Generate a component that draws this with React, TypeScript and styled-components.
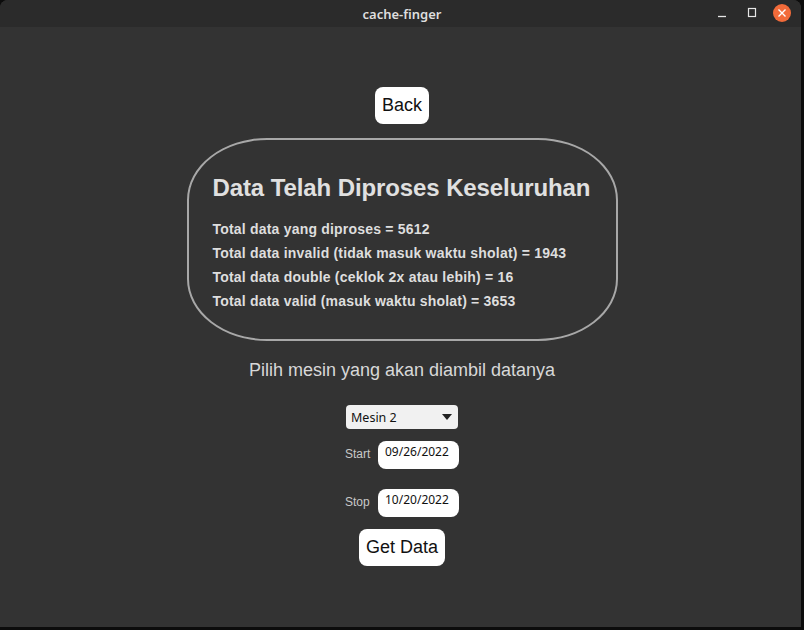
import styled, { createGlobalStyle } from 'styled-components';

const GlobalStyle = createGlobalStyle`
  html, body {
    margin: 0;
    padding: 0;
    background: #0c0c0c;
  }
  body {
    font-family: "Liberation Sans", Arial, sans-serif;
  }
`;

const Window = styled.div`
  width: 801px;
  height: 627px;
  display: flex;
  flex-direction: column;
  background: #333333;
  border-radius: 8px 8px 0 0;
  overflow: hidden;
`;

const TitleBar = styled.header`
  position: relative;
  height: 27px;
  flex: none;
  display: flex;
  align-items: center;
  justify-content: center;
  background: #2b2b2b;
`;

const Title = styled.span`
  font-family: "Noto Sans", "DejaVu Sans", sans-serif;
  font-weight: 600;
  font-size: 13px;
  color: #dedede;
  padding-left: 3px;
`;

const Controls = styled.div`
  position: absolute;
  right: 10px;
  top: 4px;
  display: flex;
  align-items: center;
  gap: 12px;
`;

const ControlButton = styled.span<{ $close?: boolean }>`
  width: 18px;
  height: 18px;
  border-radius: 50%;
  display: grid;
  place-items: center;
  background: ${({ $close }) => ($close ? '#f26b3a' : 'transparent')};
`;

const Content = styled.main`
  flex: 1;
  display: flex;
  flex-direction: column;
  align-items: center;
  padding: 60px 0 0 3px;
`;

const WhiteButton = styled.button<{ $top?: number }>`
  margin-top: ${({ $top }) => $top ?? 0}px;
  font-family: "Liberation Sans", Arial, sans-serif;
  font-size: 18px;
  color: #111;
  background: #ffffff;
  border: none;
  border-radius: 8px;
  height: 37px;
  padding: 0 7px;
  line-height: 37px;
`;

const Card = styled.section`
  box-sizing: border-box;
  width: 431px;
  margin-top: 14px;
  padding: 34px 20px 26px 24px;
  border: 2px solid #a8a8a8;
  border-radius: 80px / 62px;
  color: #dcdcdc;
`;

const Heading = styled.h2`
  margin: 0 0 15px;
  font-size: 24px;
  line-height: 28px;
  font-weight: 700;
  letter-spacing: -0.1px;
  white-space: nowrap;
  color: #e0e0e0;
`;

const StatLine = styled.p`
  margin: 0;
  font-size: 14px;
  line-height: 24px;
  font-weight: 700;
  letter-spacing: 0.2px;
  color: #dedede;
`;

const Prompt = styled.p`
  margin: 18px 0 0;
  font-size: 18px;
  line-height: 22px;
  color: #d8d8d8;
`;

const Select = styled.div`
  box-sizing: border-box;
  margin-top: 24px;
  width: 112px;
  height: 24px;
  padding: 0 6px 0 5px;
  display: flex;
  align-items: center;
  justify-content: space-between;
  background: #f1f1f1;
  border-radius: 4px;
  font-family: "Noto Sans", "DejaVu Sans", sans-serif;
  font-size: 12.5px;
  color: #111;
`;

const DateRow = styled.div<{ $gap: number }>`
  margin-top: ${({ $gap }) => $gap}px;
  display: flex;
  align-items: center;
  gap: 7px;
`;

const DateLabel = styled.label`
  width: 26px;
  font-size: 12px;
  color: #c9c9c9;
  padding-bottom: 2px;
`;

const DateInput = styled.input`
  box-sizing: border-box;
  width: 81px;
  height: 28px;
  border: none;
  border-radius: 8px;
  background: #ffffff;
  padding: 0 0 8px 7px;
  font-family: "Noto Sans", "DejaVu Sans", sans-serif;
  font-size: 12px;
  color: #111;
  outline: none;
`;

const stats = [
  'Total data yang diproses = 5612',
  'Total data invalid (tidak masuk waktu sholat) = 1943',
  'Total data double (ceklok 2x atau lebih) = 16',
  'Total data valid (masuk waktu sholat) = 3653',
];

const App = () => {
  return (
    <>
      <GlobalStyle />
      <Window>
        <TitleBar>
          <Title>cache-finger</Title>
          <Controls>
            <ControlButton>
              <svg width="12" height="12" viewBox="0 0 12 12">
                <path d="M2 9.5h8" stroke="#e6e6e6" strokeWidth="1.3" />
              </svg>
            </ControlButton>
            <ControlButton>
              <svg width="12" height="12" viewBox="0 0 12 12">
                <rect x="2.5" y="1.5" width="7" height="8" fill="none" stroke="#e6e6e6" strokeWidth="1.2" />
              </svg>
            </ControlButton>
            <ControlButton $close>
              <svg width="10" height="10" viewBox="0 0 10 10">
                <path d="M1.5 1.5l7 7M8.5 1.5l-7 7" stroke="#fff" strokeWidth="1.4" />
              </svg>
            </ControlButton>
          </Controls>
        </TitleBar>
        <Content>
          <WhiteButton>Back</WhiteButton>
          <Card>
            <Heading>Data Telah Diproses Keseluruhan</Heading>
            {stats.map((s) => (
              <StatLine key={s}>{s}</StatLine>
            ))}
          </Card>
          <Prompt>Pilih mesin yang akan diambil datanya</Prompt>
          <Select>
            <span>Mesin 2</span>
            <svg width="10" height="6" viewBox="0 0 10 6">
              <path d="M0 0h10L5 6z" fill="#222" />
            </svg>
          </Select>
          <DateRow $gap={12}>
            <DateLabel>Start</DateLabel>
            <DateInput readOnly value="09/26/2022" />
          </DateRow>
          <DateRow $gap={20}>
            <DateLabel>Stop</DateLabel>
            <DateInput readOnly value="10/20/2022" />
          </DateRow>
          <WhiteButton $top={12}>Get Data</WhiteButton>
        </Content>
      </Window>
    </>
  );
};

export default App;
